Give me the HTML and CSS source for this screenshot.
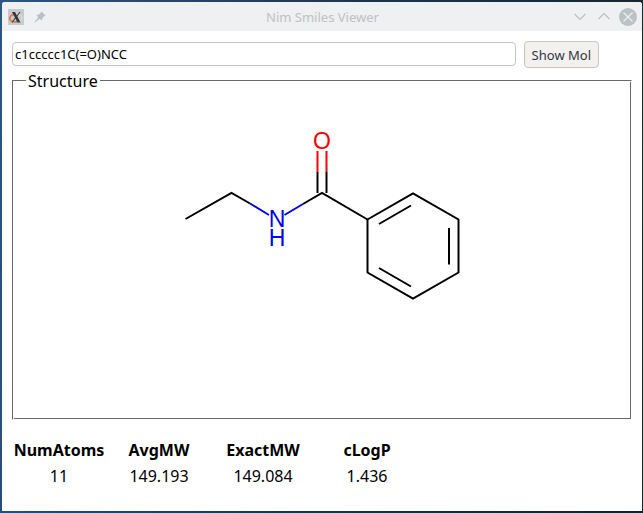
FILE: index.html
```
<!DOCTYPE html>
<html lang="en">
<head>
<meta charset="utf-8">
<title>Nim Smiles Viewer</title>
<link rel="stylesheet" href="styles.css">
</head>
<body>
<div class="window">
  <header class="titlebar">
    <div class="tools">
      <svg class="app-icon" viewBox="0 0 16 16" aria-hidden="true">
        <rect width="16" height="16" fill="#c5cbce"/>
        <ellipse cx="8" cy="9" rx="6" ry="4" fill="none" stroke="#e3d9c8" stroke-width="1.4"/>
        <path d="M6 5.200C2.500 6 1.200 8.500 2 10.500C3 13 7 13.500 9.500 12.500" fill="none" stroke="#ed6a35" stroke-width="1.600"/>
        <path d="M4 3H7L12.500 13.500H9.500Z" fill="#333638"/>
        <path d="M12 3L4 13.500" stroke="#333638" stroke-width="1.100"/>
      </svg>
      <button class="tool" type="button" aria-label="Keep above">
        <svg class="pin-icon" viewBox="0 0 12 12" aria-hidden="true">
          <path d="M7.500 0.500L11.500 4.500L10.500 5L8.500 7L8 9.500L5.500 7.800L1 11.500L0.500 11L4.200 6.500L2.500 4L5 3.500L7 1.500Z" fill="#babfc3"/>
        </svg>
      </button>
    </div>
    <h1 class="title">Nim Smiles Viewer</h1>
    <div class="controls">
      <button class="tool" type="button" aria-label="Minimize">
        <svg class="control-icon" viewBox="0 0 18 18" aria-hidden="true"><path d="M3.500 6L9 11.500L14.500 6" fill="none" stroke="#b9bec1" stroke-width="1.100"/></svg>
      </button>
      <button class="tool" type="button" aria-label="Maximize">
        <svg class="control-icon" viewBox="0 0 18 18" aria-hidden="true"><path d="M3.500 11L9 5.500L14.500 11" fill="none" stroke="#b9bec1" stroke-width="1.100"/></svg>
      </button>
      <button class="tool" type="button" aria-label="Close">
        <svg class="control-icon" viewBox="0 0 18 18" aria-hidden="true"><circle cx="9" cy="9" r="9" fill="#bcc1c4"/><path d="M4.500 4.500L13.500 13.500M13.500 4.500L4.500 13.500" fill="none" stroke="#eff0f1" stroke-width="1.200"/></svg>
      </button>
    </div>
  </header>
  <main class="content">
    <form class="query">
      <input class="smiles" type="text" aria-label="SMILES" value="c1ccccc1C(=O)NCC" spellcheck="false">
      <button class="show" type="button">Show Mol</button>
    </form>
    <fieldset class="structure">
      <legend class="legend">Structure</legend>
      <svg class="molecule" viewBox="172 122 300 186" role="img" aria-label="N-ethylbenzamide">
        <g class="bond">
          <path d="M185.500 219L231.500 193L250 203.500"/>
          <path d="M303 204L322 193L367.500 219.500"/>
          <path d="M317.500 172V193M326.500 172V193"/>
          <path d="M367.500 219.500L413 193.500L458.500 219.500V272.500L413 298.500L367.500 272.500Z"/>
          <path d="M379 224L411 205.500M449 228V264.500M379 268L411 286.500"/>
        </g>
        <path class="bond nitrogen-bond" d="M250 203.500L269 215M284.500 215L303 204"/>
        <path class="bond oxygen-bond" d="M317.500 151V172M326.500 151V172"/>
        <text class="atom oxygen" x="322" y="149">O</text>
        <text class="atom nitrogen"><tspan x="277" y="227">N</tspan><tspan x="277" y="246">H</tspan></text>
      </svg>
    </fieldset>
    <table class="properties">
      <thead><tr><th>NumAtoms</th><th>AvgMW</th><th>ExactMW</th><th>cLogP</th></tr></thead>
      <tbody><tr><td>11</td><td>149.193</td><td>149.084</td><td>1.436</td></tr></tbody>
    </table>
  </main>
</div>
</body>
</html>
```
FILE: styles.css
```
* {
  box-sizing: border-box;
}

body {
  margin: 0;
  min-height: 100vh;
  padding: 2px 1px 2px 2px;
  display: flex;
  background: linear-gradient(100deg, #2c5685, #1d3450 50%, #15202c);
  font: 16px/22px "Noto Sans", sans-serif;
  color: #000;
}

.window {
  flex: 1;
  display: flex;
  flex-direction: column;
  background: #fff;
  border-radius: 3px 3px 0 0;
  overflow: hidden;
}

.titlebar {
  height: 29px;
  padding: 0 5px 0 6px;
  display: grid;
  grid-template-columns: 1fr auto 1fr;
  align-items: center;
  background: #eff0f1;
}

.tools,
.controls {
  display: flex;
  align-items: center;
}

.tools {
  gap: 10px;
}

.controls {
  justify-content: flex-end;
  gap: 6px;
}

.tool {
  display: flex;
  padding: 0;
  border: 0;
  background: none;
}

.app-icon {
  width: 16px;
  height: 16px;
}

.pin-icon {
  width: 12px;
  height: 12px;
}

.control-icon {
  width: 18px;
  height: 18px;
}

.title {
  margin: 0;
  font-size: 13px;
  line-height: 18px;
  font-weight: 400;
  color: #bdc1c4;
}

.content {
  flex: 1;
  display: flex;
  flex-direction: column;
  padding: 10px 10px 21px;
}

.query {
  display: flex;
  align-items: center;
  gap: 8px;
  margin-right: 33px;
}

.smiles,
.show {
  border: 1px solid #c8c5c0;
  font: 13px/18px "Noto Sans", sans-serif;
}

.smiles {
  flex: 1;
  min-width: 0;
  height: 24px;
  margin-bottom: 1px;
  padding: 0 2px;
  border-radius: 4px;
  background: #fff;
  color: #000;
}

.show {
  height: 27px;
  padding: 0 7px;
  border-radius: 4px;
  background: #f2f1f0;
  color: #31363b;
}

/* Etched frame: dark outer top/left edge, dark inner bottom/right edge. */
.structure {
  flex: 1;
  display: flex;
  align-items: flex-start;
  justify-content: center;
  min-width: 0;
  margin: 1px 0 0;
  padding: 30px 0 0 13px;
  border: 1px solid;
  border-color: #696969 #fff #fff #696969;
  box-shadow: inset 1px 1px #fff, inset -1px -1px #696969;
}

.legend {
  padding: 1px 2px 0;
  background: #fff;
}

.molecule {
  width: 300px;
  height: 186px;
  margin-right: 13px;
}

.bond {
  fill: none;
  stroke: #000;
  stroke-width: 2;
}

.nitrogen-bond {
  stroke: #00f;
}

.oxygen-bond {
  stroke: #f00;
}

.atom {
  font: 23px "Liberation Sans", sans-serif;
  text-anchor: middle;
}

.nitrogen {
  fill: #00f;
}

.oxygen {
  fill: #f00;
}

.properties {
  margin: 16px 0 0 -2px;
  align-self: flex-start;
  border-spacing: 2px;
  text-align: center;
}

.properties th,
.properties td {
  min-width: 102px;
  padding: 1px;
}

.properties th:first-child,
.properties td:first-child {
  min-width: 94px;
}

.properties th {
  font-weight: 700;
}
```
